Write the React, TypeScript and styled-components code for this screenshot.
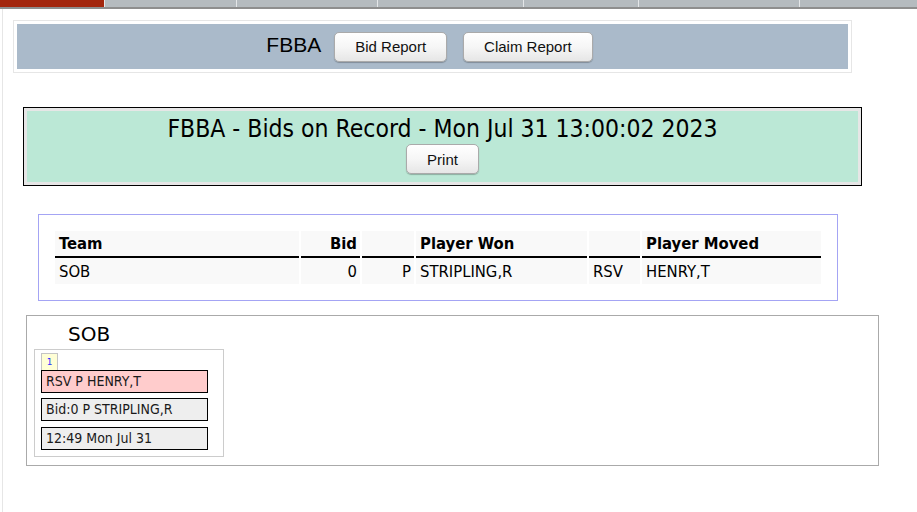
import styled, { createGlobalStyle } from "styled-components"

const GlobalStyle = createGlobalStyle`
  html, body {
    margin: 0;
    padding: 0;
    background: #fff;
  }
  body {
    font-family: "DejaVu Sans", Verdana, sans-serif;
    color: #000;
  }
`

const tabs = [
  { w: 104, active: true },
  { w: 131 },
  { w: 140 },
  { w: 145 },
  { w: 114 },
  { w: 160 },
  { w: 118 },
]

const bids = [
  { team: "SOB", bid: 0, pos: "P", won: "STRIPLING,R", movedPos: "RSV", moved: "HENRY,T" },
]

const App = () => {
  return (
    <>
      <GlobalStyle />
      <TopNav>
        {tabs.map((t, i) => (
          <Tab key={i} $active={t.active} style={{ width: t.w }} />
        ))}
      </TopNav>
      <Page>
        <HeaderPanel>
          <HeaderInner>
            <LeagueName>FBBA</LeagueName>
            <Button>Bid Report</Button>
            <Button>Claim Report</Button>
          </HeaderInner>
        </HeaderPanel>

        <TitleBox>
          <TitleInner>
            <Title>FBBA - Bids on Record - Mon Jul 31 13:00:02 2023</Title>
            <Button>Print</Button>
          </TitleInner>
        </TitleBox>

        <TableBox>
          <BidTable>
            <colgroup>
              <col style={{ width: 244 }} />
              <col style={{ width: 59 }} />
              <col style={{ width: 52 }} />
              <col style={{ width: 171 }} />
              <col style={{ width: 51 }} />
              <col style={{ width: 179 }} />
            </colgroup>
            <thead>
              <tr>
                <Th>Team</Th>
                <Th $right>Bid</Th>
                <Th />
                <Th>Player Won</Th>
                <Th />
                <Th>Player Moved</Th>
              </tr>
            </thead>
            <tbody>
              {bids.map((b) => (
                <tr key={b.team}>
                  <Td>{b.team}</Td>
                  <Td $right>{b.bid}</Td>
                  <Td $right>{b.pos}</Td>
                  <Td>{b.won}</Td>
                  <Td>{b.movedPos}</Td>
                  <Td>{b.moved}</Td>
                </tr>
              ))}
            </tbody>
          </BidTable>
        </TableBox>

        <TeamSection>
          <TeamName>SOB</TeamName>
          <Card>
            <Badge>1</Badge>
            <CardLine $kind="moved">RSV P HENRY,T</CardLine>
            <CardLine>Bid:0 P STRIPLING,R</CardLine>
            <CardLine $gap={6}>12:49 Mon Jul 31</CardLine>
          </Card>
        </TeamSection>
      </Page>
    </>
  )
}

export default App

const TopNav = styled.div`
  display: flex;
  height: 7px;
  border-bottom: 2px solid #8e8e8e;
  background: #b5bbbf;
  overflow: hidden;
`

const Tab = styled.div<{ $active?: boolean }>`
  flex: none;
  height: 7px;
  background: ${({ $active }) => ($active ? "#a3260d" : "#b5bbbf")};
  border-right: 1px solid #e4e6e8;
`

const Page = styled.div`
  margin-left: 2px;
  border-left: 1px solid #e6e6e6;
  min-height: 503px;
  padding-top: 11px;
  box-sizing: border-box;
`

const HeaderPanel = styled.div`
  width: 839px;
  margin-left: 10px;
  border: 1px solid #e6e6e6;
  padding: 3px;
  box-sizing: border-box;
`

const HeaderInner = styled.div`
  height: 45px;
  background: #aabaca;
  display: flex;
  align-items: center;
  justify-content: center;
  gap: 16px;
  padding-right: 6px;
`

const LeagueName = styled.span`
  font-family: "Liberation Sans", Arial, sans-serif;
  font-size: 21px;
  margin-right: -3px;
  margin-top: -3px;
`

const Button = styled.button`
  font-family: "Liberation Sans", Arial, sans-serif;
  font-size: 15px;
  color: #111;
  height: 30px;
  padding: 0 20px;
  background: linear-gradient(#ffffff 0%, #f6f6f6 50%, #e6e6e6 100%);
  border: 1px solid #aaaaaa;
  border-radius: 5px;
  box-shadow: 0 1px 1px rgba(0, 0, 0, 0.25);
  cursor: pointer;
`

const TitleBox = styled.div`
  width: 839px;
  margin: 34px 0 0 20px;
  border: 1px solid #000;
  padding: 3px;
  background: #e6e6e6;
  box-sizing: border-box;
`

const TitleInner = styled.div`
  height: 71px;
  background: #bbe8d6;
  display: flex;
  flex-direction: column;
  align-items: center;
  padding-top: 4px;
  box-sizing: border-box;
  gap: 2px;
`

const Title = styled.div`
  font-family: "DejaVu Sans", Tahoma, sans-serif;
  font-stretch: condensed;
  font-size: 24.5px;
  line-height: 27px;
`

const TableBox = styled.div`
  width: 800px;
  margin: 28px 0 0 35px;
  border: 1px solid #a4a4f4;
  padding: 16px;
  box-sizing: border-box;
`

const BidTable = styled.table`
  table-layout: fixed;
  border-collapse: separate;
  border-spacing: 2px 0;
  width: calc(100% + 4px);
  margin: 0 -2px;
  font-family: "DejaVu Sans", Tahoma, sans-serif;
  font-stretch: condensed;
  font-size: 16.5px;
`

const Th = styled.th<{ $right?: boolean }>`
  height: 23px;
  padding: 1px 3px 1px 4px;
  background: #f9f9f9;
  border-bottom: 2px solid #000;
  text-align: ${({ $right }) => ($right ? "right" : "left")};
  font-weight: bold;
`

const Td = styled.td<{ $right?: boolean }>`
  height: 26px;
  padding: 0 3px 0 4px;
  background: #f9f9f9;
  text-align: ${({ $right }) => ($right ? "right" : "left")};
  white-space: nowrap;
`

const TeamSection = styled.div`
  width: 853px;
  margin: 14px 0 0 23px;
  border: 1px solid #aaaaaa;
  padding: 7px 7px 8px;
  box-sizing: border-box;
`

const TeamName = styled.div`
  font-family: "DejaVu Sans", Verdana, sans-serif;
  font-size: 20px;
  line-height: 22px;
  padding-left: 34px;
  margin-bottom: 4px;
`

const Card = styled.div`
  width: 190px;
  border: 1px solid #cccccc;
  padding: 3px 15px 6px 6px;
  box-sizing: border-box;
`

const Badge = styled.div`
  width: 17px;
  height: 17px;
  box-sizing: border-box;
  border: 1px solid #c4c4c4;
  border-bottom: none;
  background: #ffffd6;
  color: #3333ff;
  font-family: "DejaVu Sans", Verdana, sans-serif;
  font-size: 9px;
  line-height: 16px;
  text-align: center;
`

const CardLine = styled.div<{ $kind?: "moved"; $gap?: number }>`
  height: 23px;
  box-sizing: border-box;
  border: 1px solid #000;
  margin-top: ${({ $gap, $kind }) => ($kind ? 0 : $gap ?? 5)}px;
  background: ${({ $kind }) => ($kind === "moved" ? "#ffcccc" : "#eeeeee")};
  color: #1a1a1a;
  font-family: "DejaVu Sans", Tahoma, sans-serif;
  font-stretch: condensed;
  font-size: 14px;
  line-height: 21px;
  padding-left: 4px;
  white-space: nowrap;
`
